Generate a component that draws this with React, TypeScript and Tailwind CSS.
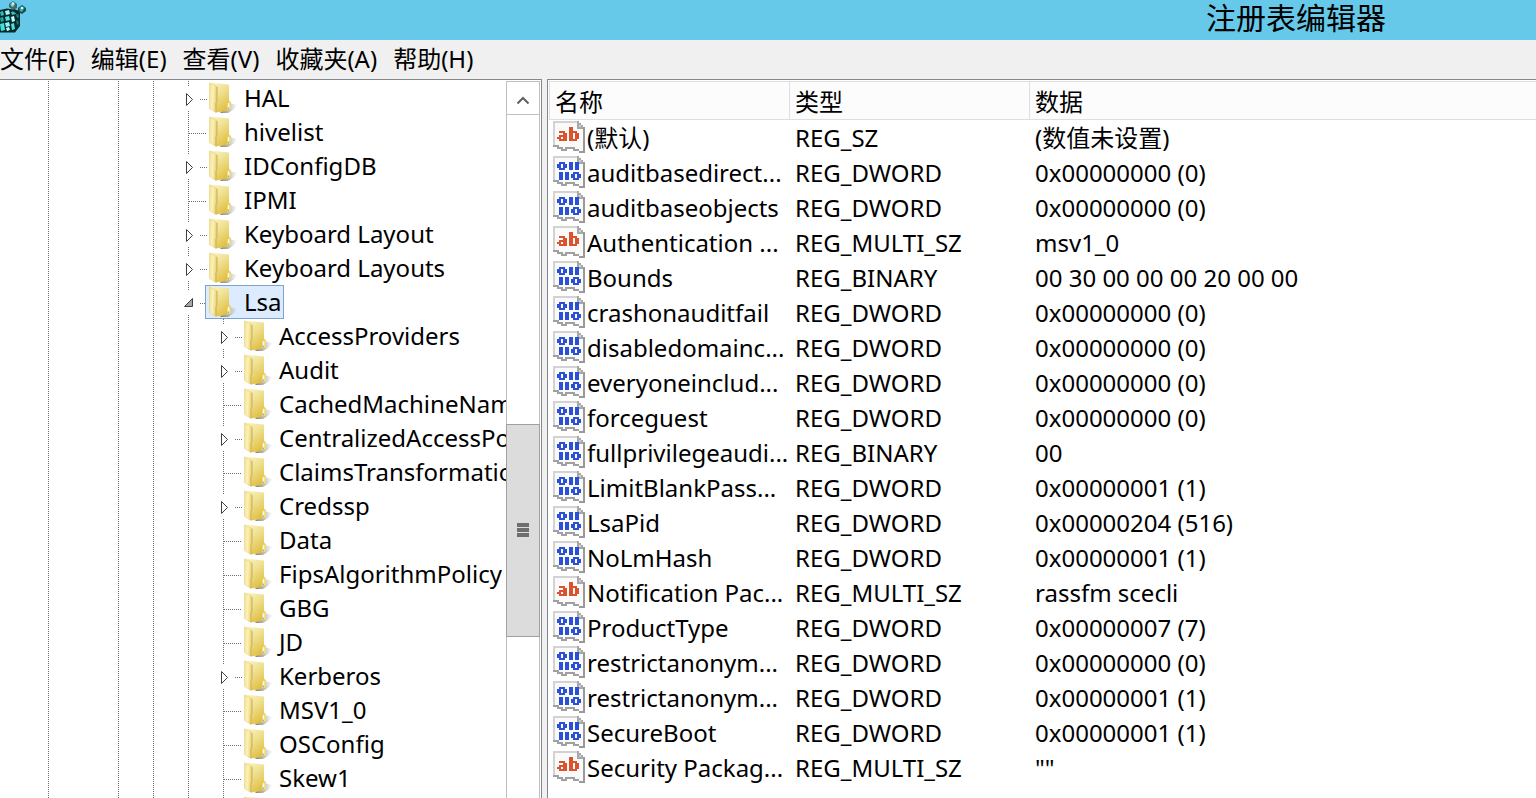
import React from "react";

type Node = { label: string; depth: 0 | 1; state?: "closed" | "open"; selected?: boolean };

const nodes: Node[] = [
  { label: "HAL", depth: 0, state: "closed" },
  { label: "hivelist", depth: 0 },
  { label: "IDConfigDB", depth: 0, state: "closed" },
  { label: "IPMI", depth: 0 },
  { label: "Keyboard Layout", depth: 0, state: "closed" },
  { label: "Keyboard Layouts", depth: 0, state: "closed" },
  { label: "Lsa", depth: 0, state: "open", selected: true },
  { label: "AccessProviders", depth: 1, state: "closed" },
  { label: "Audit", depth: 1, state: "closed" },
  { label: "CachedMachineNames", depth: 1 },
  { label: "CentralizedAccessPolicies", depth: 1, state: "closed" },
  { label: "ClaimsTransformation", depth: 1 },
  { label: "Credssp", depth: 1, state: "closed" },
  { label: "Data", depth: 1 },
  { label: "FipsAlgorithmPolicy", depth: 1 },
  { label: "GBG", depth: 1 },
  { label: "JD", depth: 1 },
  { label: "Kerberos", depth: 1, state: "closed" },
  { label: "MSV1_0", depth: 1 },
  { label: "OSConfig", depth: 1 },
  { label: "Skew1", depth: 1 },
  { label: "", depth: 1 },
];

const values: [string, string, string][] = [
  ["(默认)", "REG_SZ", "(数值未设置)"],
  ["auditbasedirect...", "REG_DWORD", "0x00000000 (0)"],
  ["auditbaseobjects", "REG_DWORD", "0x00000000 (0)"],
  ["Authentication ...", "REG_MULTI_SZ", "msv1_0"],
  ["Bounds", "REG_BINARY", "00 30 00 00 00 20 00 00"],
  ["crashonauditfail", "REG_DWORD", "0x00000000 (0)"],
  ["disabledomainc...", "REG_DWORD", "0x00000000 (0)"],
  ["everyoneinclud...", "REG_DWORD", "0x00000000 (0)"],
  ["forceguest", "REG_DWORD", "0x00000000 (0)"],
  ["fullprivilegeaudi...", "REG_BINARY", "00"],
  ["LimitBlankPass...", "REG_DWORD", "0x00000001 (1)"],
  ["LsaPid", "REG_DWORD", "0x00000204 (516)"],
  ["NoLmHash", "REG_DWORD", "0x00000001 (1)"],
  ["Notification Pac...", "REG_MULTI_SZ", "rassfm scecli"],
  ["ProductType", "REG_DWORD", "0x00000007 (7)"],
  ["restrictanonym...", "REG_DWORD", "0x00000000 (0)"],
  ["restrictanonym...", "REG_DWORD", "0x00000001 (1)"],
  ["SecureBoot", "REG_DWORD", "0x00000001 (1)"],
  ["Security Packag...", "REG_MULTI_SZ", '""'],
];

const menus = ["文件(F)", "编辑(E)", "查看(V)", "收藏夹(A)", "帮助(H)"];

const stringGlyph = [
  "................",
  "................",
  "................",
  "........##......",
  "........##......",
  "...###..####....",
  ".....##.##.##...",
  "...####.##.##...",
  "..##.##.##.##...",
  "...####.####....",
];

const binaryGlyph = [
  "................",
  "................",
  "................",
  "...###..##.##...",
  "..##.##.##.##...",
  "..##.##.##.##...",
  "...###..##.##...",
  "................",
  "...##.##..###...",
  "...##.##.##.##..",
  "...##.##.##.##..",
  "...##.##..###...",
];

function glyphPath(rows: string[]) {
  return rows
    .flatMap((row, y) => [...row].map((c, x) => (c === "#" ? `M${x} ${y}h1v1h-1z` : "")))
    .join("");
}

const stringPath = glyphPath(stringGlyph);
const binaryPath = glyphPath(binaryGlyph);

function ValueIcon({ text }: { text: boolean }) {
  return (
    <svg
      width="32"
      height="32"
      viewBox="0 0 16 16"
      shapeRendering="crispEdges"
      className="shrink-0"
      aria-hidden="true"
    >
      <path d="M0 0H12V1H13V2H14V3H15V15H13V14H10V13H6V14H4V13H2V12H0Z" fill="#fafafa" />
      <path d="M0 0H13V1H1V12H0Z" fill="#d3d3d3" />
      <path d="M12 1h1v1h1v1h1v1h-3z" fill="#d0d0d0" />
      <path d="M12 0h1v1h-1zM13 1h1v1h-1zM14 2h1v1h-1zM12 3h3v1h-3zM12 1h1v2h-1z" fill="#a8a8a8" />
      <path d="M15 3h1v13h-3v-1h2z" fill="#999" />
      <path d="M0 12h3v1h-3zM2 13h3v1h-3zM4 14h3v1h-3zM6 13h5v1h-5zM10 14h3v1h-3z" fill="#a0a0a0" />
      <path d={text ? stringPath : binaryPath} fill={text ? "#da532c" : "#2b50d8"} />
    </svg>
  );
}

function FolderIcon() {
  return (
    <svg width="30" height="32" viewBox="0 0 30 32" className="shrink-0" aria-hidden="true">
      <defs>
        <linearGradient id="folderBack" x1="0" y1="0" x2="0.6" y2="1">
          <stop offset="0" stopColor="#fbf6c8" />
          <stop offset="0.45" stopColor="#f0e294" />
          <stop offset="1" stopColor="#e0bf42" />
        </linearGradient>
        <linearGradient id="folderFlap" x1="0" y1="0" x2="1" y2="0.2">
          <stop offset="0" stopColor="#f3df8c" />
          <stop offset="0.5" stopColor="#fbf2b8" />
          <stop offset="1" stopColor="#e8cf76" />
        </linearGradient>
        <linearGradient id="folderShade" x1="0" y1="0" x2="1" y2="0">
          <stop offset="0" stopColor="#555" stopOpacity="0.75" />
          <stop offset="0.5" stopColor="#777" stopOpacity="0.5" />
          <stop offset="1" stopColor="#bbb" stopOpacity="0" />
        </linearGradient>
      </defs>
      <path d="M20 21L29 23L24 28L19 31H11Z" fill="url(#folderShade)" />
      <path d="M1 0.500L20 2.500V18.500L22 20.500V27.500L18 29L7 30.500L2 26Z" fill="url(#folderBack)" />
      <path d="M0.500 1L8 4.500V19L7 21V30.500L0.500 26.500Z" fill="url(#folderFlap)" stroke="#e3cb78" strokeWidth="0.5" />
      <path d="M8 5V19L7 21V30" fill="none" stroke="#c9aa4e" strokeWidth="0.8" />
      <path d="M18.500 21L20 19.500L22 21V27.500L18.500 28.500Z" fill="#f0da78" />
      <path d="M19.500 21.500V27.500" stroke="#fffef0" strokeWidth="1.4" />
      <path d="M19.500 25.500V27.500" stroke="#71b6d5" strokeWidth="1.2" />
    </svg>
  );
}

function Branch({ state }: { state?: "closed" | "open" }) {
  return (
    <svg width="21" height="34" viewBox="0 0 21 34" className="shrink-0 overflow-visible" aria-hidden="true">
      <g stroke="#6e6e6e" strokeDasharray="1 1">
        {state ? <path d="M4.500 0V5M4.500 30V34M16 18.500H23" /> : <path d="M4.500 0V34M5 18.500H23" />}
      </g>
      {state === "closed" && <path d="M2.500 12.500V24.500L8.500 18.500Z" fill="#fff" stroke="#404040" />}
      {state === "open" && <path d="M8.500 13.500V21.500H0.500Z" fill="#a6a6a6" stroke="#404040" />}
    </svg>
  );
}

const dots = "w-px h-full bg-[repeating-linear-gradient(to_bottom,#6e6e6e_0px,#6e6e6e_1px,transparent_1px,transparent_2px)]";

function Guide({ size }: { size: string }) {
  return (
    <span className={`h-full shrink-0 ${size}`}>
      <span className={`block ${dots}`} />
    </span>
  );
}

function TreeRow({ node }: { node: Node }) {
  return (
    <li className="flex h-[34px] items-center pl-12">
      <Guide size="w-[70px]" />
      <Guide size="w-[35px]" />
      {node.depth === 1 && <Guide size="w-[35px]" />}
      <Guide size="w-[31px]" />
      <Branch state={node.state} />
      <button
        type="button"
        aria-label={node.label ? undefined : "folder"}
        className={`flex h-[34px] shrink-0 items-center gap-[5px] whitespace-nowrap border pl-[3px] pr-px ${
          node.selected ? "border-[#7da2ce] bg-[#dcebfd]" : "border-transparent"
        }`}
      >
        <FolderIcon />
        {node.label && <span>{node.label}</span>}
      </button>
    </li>
  );
}

function RegeditIcon() {
  const blocks: [number, number, number, number, string][] = [
    [0, 11, 4, 5, "#2fbdb8"],
    [5, 10, 5, 5, "#a5f5f2"],
    [11, 11, 5, 4, "#2fc4c0"],
    [0, 17, 4, 5, "#1fa3a2"],
    [5, 16, 5, 5, "#4fe0dc"],
    [11, 16, 4, 6, "#c4fdfb"],
    [0, 23, 5, 8, "#42e2dc"],
    [5, 22, 5, 5, "#8df6f2"],
    [6, 27, 4, 4, "#b8fbf8"],
    [11, 23, 4, 7, "#4fe0dc"],
    [16, 13, 3, 5, "#168a8a"],
    [16, 20, 3, 5, "#117375"],
  ];
  return (
    <svg width="27" height="34" viewBox="0 0 27 34" aria-hidden="true">
      <path d="M0 10L7 8.500L16 10L20 12V26L15 32.500H0Z" fill="#062a2c" />
      {blocks.map(([x, y, w, h, c]) => (
        <path key={`${x}-${y}`} d={`M${x} ${y + 1}l${w - 1} -1l1 ${h - 1}l-${w - 1} 1z`} fill={c} />
      ))}
      <path d="M9 4L13 1L17 4V8L13 10L9 7Z" fill="#46666a" />
      <path d="M10.500 4L13 2L15 4L13 7L11 6Z" fill="#69d8d8" />
      <path d="M18 8L22 5L26 8V11L22 14L18 12Z" fill="#25474a" />
      <path d="M19.500 8L22 6L24.500 8L22 12L20 11Z" fill="#28b8b8" />
      <path d="M14 9L19 11L18 15L13 11Z" fill="#0c2527" />
      <path d="M12 2.500h2v2h-2zM21 7h2v2h-2z" fill="#d5ffff" />
    </svg>
  );
}

export default function App() {
  return (
    <div className="flex h-screen flex-col overflow-hidden bg-[#f0f0f0] font-['Noto_Sans','Noto_Sans_CJK_SC',sans-serif] text-2xl leading-[34px] text-black">
      <header className="flex h-10 shrink-0 items-start justify-between bg-[#66c9e9] pr-[150px]">
        <RegeditIcon />
        <h1 className="text-[30px] leading-[36px]">注册表编辑器</h1>
      </header>

      <nav className="flex h-[39px] shrink-0 items-start gap-4">
        {menus.map((m) => (
          <button key={m} type="button" className="leading-[37px]">
            {m}
          </button>
        ))}
      </nav>

      <main className="flex min-h-0 flex-1">
        <section className="flex w-[542px] shrink-0 border-r border-t border-[#828790] bg-white pr-px">
          <ul className="min-w-0 flex-1 overflow-hidden pt-px">
            {nodes.map((n, i) => (
              <TreeRow key={i} node={n} />
            ))}
          </ul>
          <div className="mt-px flex w-[34px] shrink-0 flex-col border-x border-[#c0c0c0]">
            <button
              type="button"
              aria-label="向上滚动"
              className="flex h-[34px] items-center justify-center border-y border-[#c0c0c0] pt-1"
            >
              <svg width="14" height="9" viewBox="0 0 14 9" aria-hidden="true">
                <path d="M1.500 7.500L7 2L12.500 7.500" fill="none" stroke="#606060" strokeWidth="2" />
              </svg>
            </button>
            <div className="-mx-px mt-[309px] flex h-[213px] flex-col items-center justify-center gap-px border border-[#a0a0a0] bg-[#dcdcdc] pb-[2px]">
              <span className="h-1 w-3 bg-[#6e6e6e]" />
              <span className="h-1 w-3 bg-[#6e6e6e]" />
              <span className="h-1 w-3 bg-[#6e6e6e]" />
            </div>
          </div>
        </section>

        <section className="ml-[5px] min-w-0 flex-1 overflow-hidden border-l border-t border-[#828790] bg-white pl-px pt-px">
          <table className="w-full table-fixed border-separate border-spacing-0 text-left">
            <thead>
              <tr className="h-[39px] bg-[#fcfcfc]">
                <th className="w-[240px] border-y border-l border-[#dedede] p-0 pl-[5px] pt-[2px] font-normal">名称</th>
                <th className="w-[240px] border-y border-l border-[#dedede] p-0 pl-[5px] pt-[2px] font-normal">类型</th>
                <th className="border-y border-l border-[#dedede] p-0 pl-[5px] pt-[2px] font-normal">数据</th>
              </tr>
            </thead>
            <tbody>
              {values.map(([name, type, data], i) => (
                <tr key={i} className="h-[35px] whitespace-nowrap">
                  <td className="p-0 pl-1 pt-px align-top">
                    <div className="flex items-start gap-[2px]">
                      <ValueIcon text={type.endsWith("SZ")} />
                      <span>{name}</span>
                    </div>
                  </td>
                  <td className="p-0 pl-[6px] pt-px align-top">{type}</td>
                  <td className="p-0 pl-[6px] pt-px align-top">{data}</td>
                </tr>
              ))}
            </tbody>
          </table>
        </section>
      </main>
    </div>
  );
}
